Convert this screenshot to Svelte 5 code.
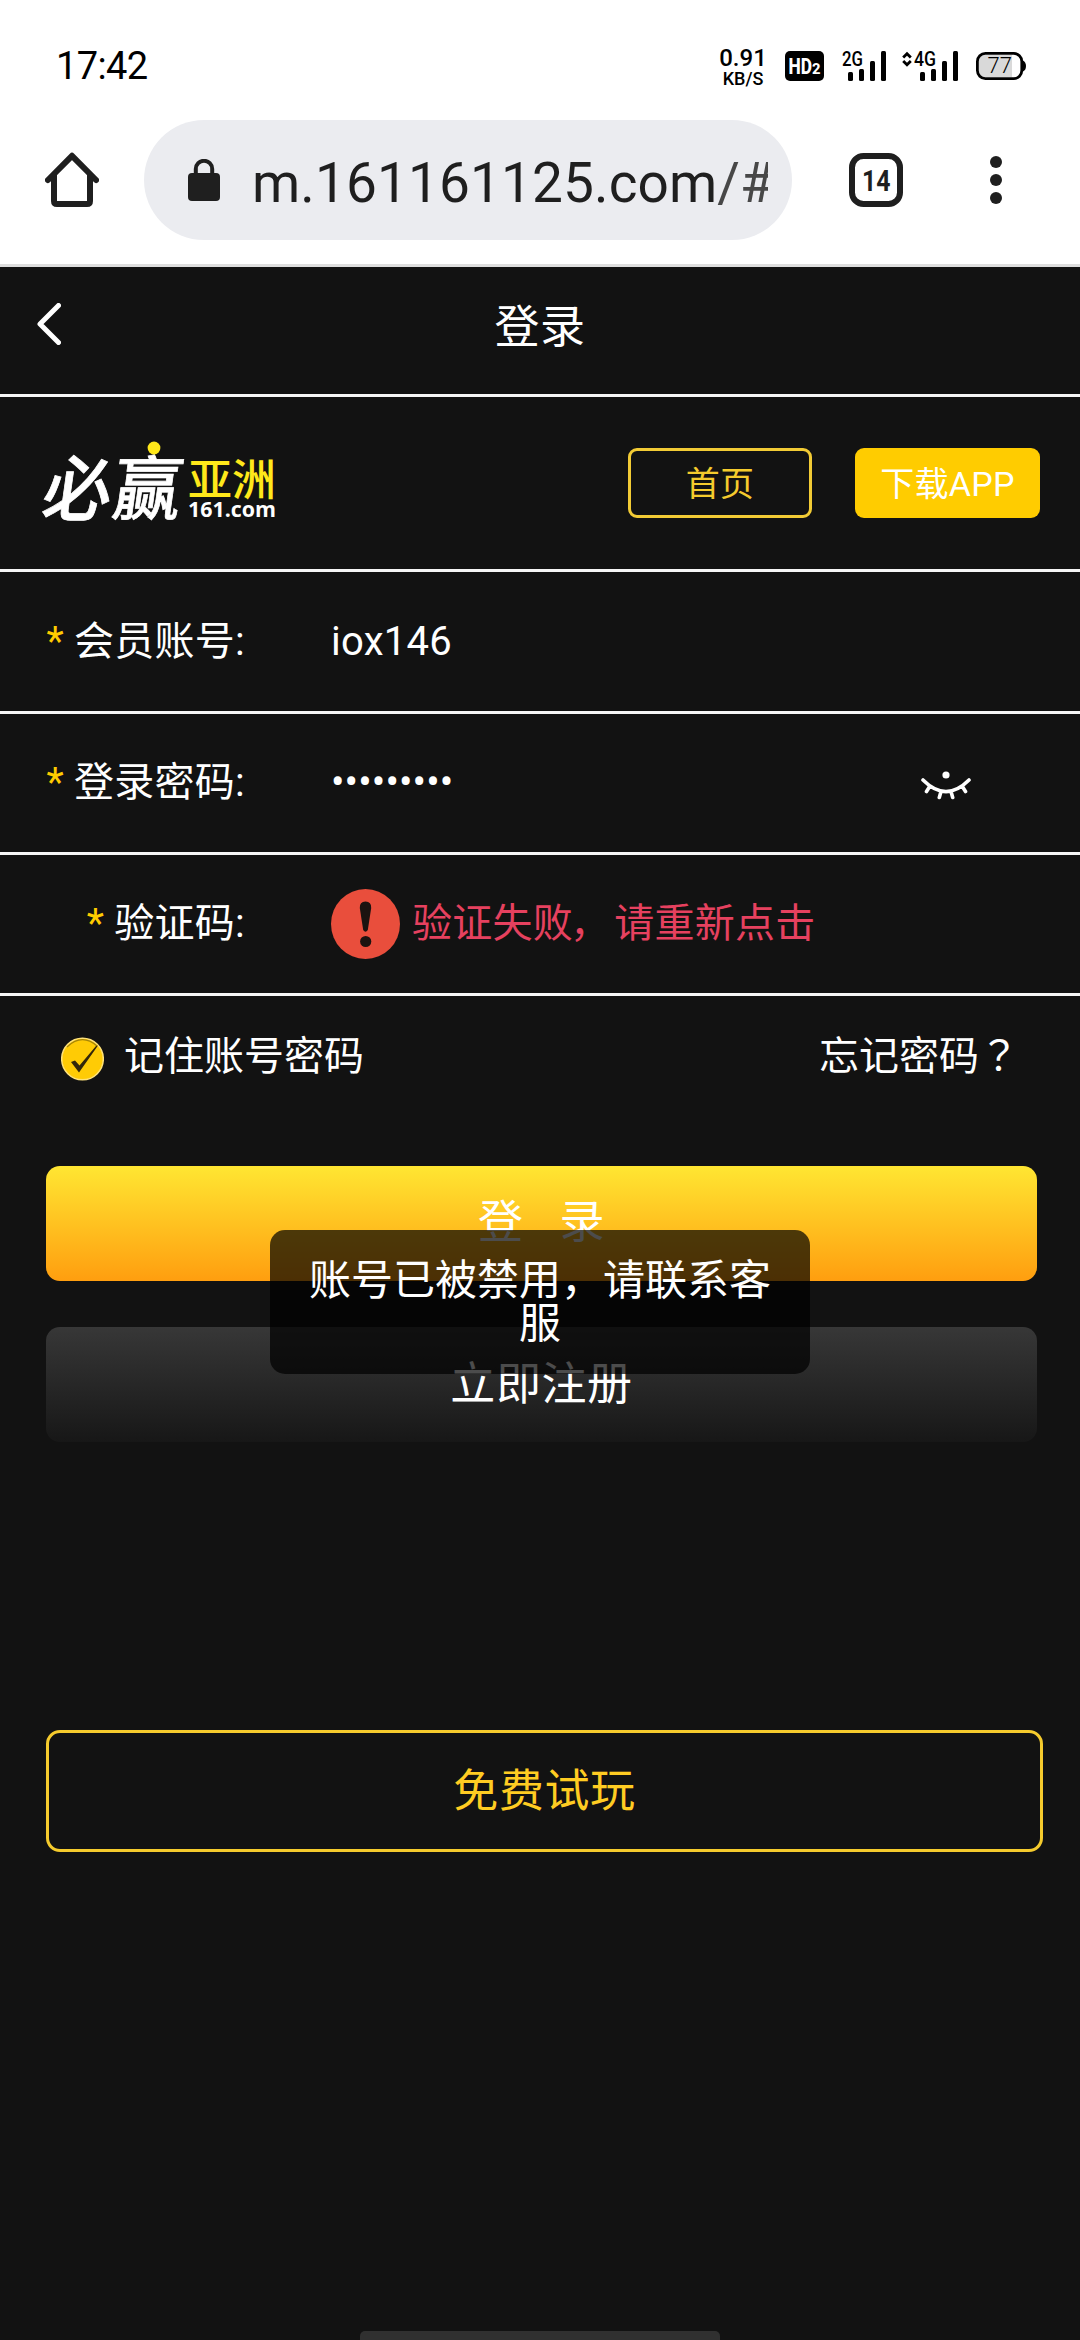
<script lang="ts">
	let account = $state('iox146');
	let password = $state('a1b2c3d4e');
	let remember = $state(true);
	let captchaFailed = $state(true);
	let toast = $state('账号已被禁用，请联系客服');

	const masked = $derived('•'.repeat(password.length));

	// Signal strength bars: x offset and height
	const BARS = [
		{ x: 0, h: 9 },
		{ x: 11, h: 12 },
		{ x: 22, h: 20 },
		{ x: 33, h: 30 },
	];
</script>

{#snippet signal()}
	{#each BARS as bar}
		<rect x={bar.x} y={30 - bar.h} width="5" height={bar.h} rx="1.5" />
	{/each}
{/snippet}

<div class="phone" lang="zh-CN">
	<div class="status-bar">
		<span class="time">17:42</span>
		<div class="status-icons">
			<div class="speed">
				<span class="rate">0.91</span>
				<span class="unit">KB/S</span>
			</div>
			<svg class="hd" width="39" height="30" viewBox="0 0 39 30">
				<rect width="39" height="30" rx="5" />
				<text x="3.5" y="22.5" font-size="22" textLength="23.5" lengthAdjust="spacingAndGlyphs">HD</text>
				<text x="27" y="22.5" font-size="15" textLength="8.5" lengthAdjust="spacingAndGlyphs">2</text>
			</svg>
			<svg class="sim1" width="45" height="30" viewBox="0 0 45 30">
				<text x="0" y="14.5" textLength="21" lengthAdjust="spacingAndGlyphs">2G</text>
				<g transform="translate(6 0)">{@render signal()}</g>
			</svg>
			<svg class="sim2" width="56" height="30" viewBox="0 0 56 30">
				<path d="M1.2 6.5 L5 2.7 L8.8 6.5 M1.2 10 L5 13.8 L8.8 10" fill="none" stroke="#000" stroke-width="2.8" />
				<text x="12" y="14.5" textLength="22" lengthAdjust="spacingAndGlyphs">4G</text>
				<g transform="translate(18 0)">{@render signal()}</g>
			</svg>
			<svg class="battery" width="50" height="28" viewBox="0 0 50 28">
				<path d="M4 3 H36 V25 H8 Q3 25 3 20 V8 Q3 3 8 3 Z" fill="#d9d9d9" />
				<rect x="1.4" y="1.4" width="44.4" height="25.2" rx="8" fill="none" stroke="#000" stroke-width="2.8" />
				<path d="M47 8.5 Q50 10 50 14 Q50 18 47 19.5 Z" />
				<text class="level" x="11.5" y="21.3">77</text>
			</svg>
		</div>
	</div>

	<div class="browser-bar">
		<svg class="home" width="54" height="56" viewBox="0 0 54 56">
			<path d="M3 28 L27 3.8 L51 28 M9 23 V49 Q9 52 12 52 H42 Q45 52 45 49 V23" fill="none" stroke="#1f1f1f" stroke-width="6" stroke-linecap="round" stroke-linejoin="round" />
		</svg>
		<div class="omnibox">
			<svg width="32" height="42" viewBox="0 0 32 42">
				<rect x="0" y="14" width="32" height="28" rx="4" fill="#1f1f1f" />
				<path d="M7.8 16 V10 A8.2 8.2 0 0 1 24.2 10 V16" fill="none" stroke="#1f1f1f" stroke-width="4" />
			</svg>
			<div class="url">m.161161125.com<span>/#</span></div>
		</div>
		<svg class="tabs" width="54" height="54" viewBox="0 0 54 54">
			<rect x="3" y="3" width="48" height="48" rx="11.5" fill="none" stroke="#1f1f1f" stroke-width="6" />
			<text x="13" y="38" textLength="28.5" lengthAdjust="spacingAndGlyphs">14</text>
		</svg>
		<svg class="menu" width="12" height="48" viewBox="0 0 12 48">
			<circle cx="6" cy="6" r="6" />
			<circle cx="6" cy="24" r="6" />
			<circle cx="6" cy="42" r="6" />
		</svg>
	</div>

	<header class="title-bar">
		<svg class="back" width="24" height="42" viewBox="0 0 24 42">
			<path d="M21.5 2.5 L3 21 L21.5 39.5" fill="none" stroke="#fff" stroke-width="5" stroke-linecap="round" stroke-linejoin="round" />
		</svg>
		<h1>登录</h1>
	</header>

	<div class="brand-bar">
		<svg class="logo" width="236" height="84" viewBox="0 0 236 84">
			<text class="logo-main" transform="translate(-2 73.5) skewX(-8) scale(.93 .96)" x="0" y="0">必</text>
			<text class="logo-main" transform="translate(68 73) skewX(-8) scale(.93 .94)" x="0" y="0">赢</text>
			<circle cx="112" cy="7" r="6.4" fill="#ffe81a" />
			<text class="logo-side" x="146" y="55">亚洲</text>
			<text class="logo-site" x="146" y="76" textLength="88" lengthAdjust="spacingAndGlyphs">161.com</text>
		</svg>
		<button class="small-btn outline">首页</button>
		<button class="small-btn solid">下载APP</button>
	</div>

	<div class="field">
		<span class="label"><i>*</i> 会员账号:</span>
		<span class="value">{account}</span>
	</div>
	<div class="field">
		<span class="label"><i>*</i> 登录密码:</span>
		<span class="value masked">{masked}</span>
		<svg class="eye" width="50" height="30" viewBox="0 0 50 30">
			<circle cx="25" cy="4" r="3.6" fill="#fff" />
			<path d="M2 9 Q25 32 48 9 M9 15 L5.5 20.5 M20 20.5 L18.3 26.5 M30 20.5 L31.7 26.5 M41 15 L44.5 20.5" fill="none" stroke="#fff" stroke-width="3.6" stroke-linecap="round" />
		</svg>
	</div>
	<div class="field">
		<span class="label"><i>*</i> 验证码:</span>
		{#if captchaFailed}
			<svg class="warn" width="69" height="70" viewBox="0 0 69 70">
				<ellipse cx="34.5" cy="35" rx="34.5" ry="35" fill="#e94e3c" />
				<path d="M34.5 12.5 Q40.5 12.5 40.2 19 L36.8 41 Q34.5 44.5 32.2 41 L28.8 19 Q28.5 12.5 34.5 12.5 Z" fill="#1b1310" />
				<circle cx="34.7" cy="52.5" r="5.6" fill="#1b1310" />
			</svg>
			<span class="error">验证失败<span class="comma">，</span>请重新点击</span>
		{/if}
	</div>

	<div class="options">
		<button class="remember" onclick={() => (remember = !remember)}>
			<svg width="43" height="44" viewBox="0 0 43 44">
				<circle cx="21.5" cy="22" r="20.8" fill="#ffcb05" stroke="#ffe27a" stroke-width="1.5" />
				<path d="M6 10 Q21 -4 36 9" fill="none" stroke="#a58408" stroke-width="1.2" />
				{#if remember}
					<path d="M10 25 L14 23.5 L18.5 28.5 L35 9 L37 8.5 L18 35.5 Z" fill="#33260a" />
				{/if}
			</svg>
			<span>记住账号密码</span>
		</button>
		<span class="forgot">忘记密码<span lang="ja">？</span></span>
	</div>

	<div class="actions">
		<button class="btn login">登<span>录</span></button>
		<button class="btn register">立即注册</button>
		<button class="btn trial">免费试玩</button>
		{#if toast}
			<div class="toast">{toast}</div>
		{/if}
	</div>

	<div class="nav-handle"></div>
</div>

<style>
	:global(body) {
		background: #121212;
	}

	.phone {
		display: flex;
		flex-direction: column;
		width: 1080px;
		height: 2340px;
		overflow: hidden;
		background: #121212;
		color: #fff;
		font-family: Roboto, 'Noto Sans CJK SC', sans-serif;
		font-size: 40px;
		line-height: 1;
	}

	button {
		padding: 0;
		border: none;
		background: none;
		color: inherit;
		font: inherit;
	}

	svg { display: block; flex: none; }

	/* ── Status bar ───────────────────────────── */
	.status-bar {
		display: flex;
		align-items: flex-start;
		justify-content: space-between;
		box-sizing: border-box;
		height: 120px;
		padding: 47px 54px 0 56px;
		background: #fff;
		color: #000;
		flex: none;
	}

	.time {
		font-size: 38px;
		line-height: 38px;
		letter-spacing: -0.6px;
	}

	.status-icons {
		display: flex;
		align-items: flex-start;
	}

	.speed {
		display: flex;
		flex-direction: column;
		align-items: center;
		width: 48px;
		margin: -1px 18px 0 0;
		font-weight: 500;
	}

	.rate { font-size: 24px; line-height: 24px; }
	.unit { font-size: 18px; line-height: 17px; }

	.hd { margin: 4px 18px 0 0; }
	.hd text { fill: #fff; font-weight: 800; }

	.sim1, .sim2 { margin-top: 4px; overflow: visible; }
	.sim1 { margin-right: 15px; }
	.sim2 { margin-right: 18px; }
	.sim1 text, .sim2 text { font-size: 20px; font-weight: 500; }

	.battery { margin-top: 5px; }
	.battery .level { font-size: 22px; font-weight: 300; }

	/* ── Browser bar ──────────────────────────── */
	.browser-bar {
		display: flex;
		align-items: center;
		box-sizing: border-box;
		height: 147px;
		padding: 0 78px 24px 45px;
		border-bottom: 3px solid #dedede;
		background: #fff;
		flex: none;
	}

	.omnibox {
		display: flex;
		align-items: center;
		box-sizing: border-box;
		width: 648px;
		height: 120px;
		margin-left: 45px;
		padding: 0 24px 0 44px;
		border-radius: 60px;
		background: #ebecf0;
	}

	.url {
		flex: 1;
		min-width: 0;
		margin-left: 32px;
		overflow: hidden;
		color: #1f1f1f;
		font-size: 55px;
		line-height: 68px;
		padding-top: 5px;
		white-space: nowrap;
		letter-spacing: 0.1px;
	}

	.url span { color: #474747; }

	.tabs { margin-left: 57px; }
	.tabs text { fill: #1f1f1f; font-size: 30px; font-weight: 700; }

	.menu { margin-left: auto; fill: #1f1f1f; }

	/* ── Header ───────────────────────────────── */
	.title-bar {
		display: grid;
		grid-template-columns: 120px 1fr 120px;
		align-items: center;
		box-sizing: border-box;
		height: 130px;
		padding-bottom: 7px;
		border-bottom: 3px solid #f5f5f5;
		flex: none;
	}

	.back { margin: -6px 0 0 37px; }

	h1 {
		margin: 0;
		font-size: 45px;
		font-weight: 400;
		text-align: center;
		letter-spacing: 0.6px;
	}

	.brand-bar {
		display: flex;
		align-items: center;
		box-sizing: border-box;
		height: 175px;
		padding: 0 40px 0 42px;
		border-bottom: 3px solid #f5f5f5;
		flex: none;
	}

	.logo { margin-right: auto; overflow: visible; }
	.logo-main { fill: #fff; font-size: 74px; font-weight: 500; stroke: #fff; stroke-width: 0.8; }
	.logo-side { fill: #ffe81a; font-size: 44px; font-weight: 500; }
	.logo-site { fill: #fff; font-family: 'Open Sans', sans-serif; font-size: 22px; font-weight: 700; }

	.small-btn {
		box-sizing: border-box;
		height: 70px;
		padding-top: 1px;
		border-radius: 9px;
		font-size: 34px;
		letter-spacing: 0.3px;
	}

	.outline { width: 184px; border: 3px solid #f2cb35; color: #f5cb2d; }
	.solid { width: 185px; margin-left: 43px; background: #ffcc00; }

	/* ── Form ─────────────────────────────────── */
	.field {
		display: flex;
		align-items: center;
		box-sizing: border-box;
		height: 141px;
		border-bottom: 3px solid #f5f5f5;
		letter-spacing: 0.25px;
		flex: none;
	}

	.brand-bar + .field { height: 142px; }

	.label {
		width: 245px;
		margin-right: 86px;
		text-align: right;
	}

	.label i { color: #fc0; font-style: normal; }
	.masked { letter-spacing: 0.1px; }
	.eye { margin: 5px 109px 0 auto; }
	.error { margin-left: 12px; color: #e6415f; }
	.comma { margin: 0 4px 0 -3px; }

	.options {
		display: flex;
		justify-content: space-between;
		align-items: center;
		height: 125px;
		padding: 0 61px 0 61px;
		flex: none;
	}

	.options span { padding-bottom: 3px; }
	.remember { display: flex; align-items: center; gap: 20px; }

	/* ── Buttons ──────────────────────────────── */
	.actions {
		position: relative;
		display: flex;
		flex-direction: column;
		padding: 45px 37px 0 46px;
	}

	.btn {
		box-sizing: border-box;
		width: 991px;
		height: 115px;
		border-radius: 14px;
		font-size: 45px;
		letter-spacing: 0.6px;
	}

	.login { padding-bottom: 2px; background: linear-gradient(#ffe632, #ff9e0f); }
	.login span { margin-left: 36px; }
	.register { margin-top: 46px; background: linear-gradient(#373737, #171717); }

	.trial {
		width: 997px;
		height: 122px;
		margin-top: 288px;
		border: 3px solid #f5cb2d;
		color: #fc2;
	}

	.toast {
		position: absolute;
		top: 109px;
		left: 270px;
		box-sizing: border-box;
		width: 540px;
		height: 144px;
		padding: 29px 38px 27px;
		border-radius: 15px;
		background: rgba(0, 0, 0, 0.7);
		font-size: 42px;
		line-height: 43px;
		text-align: center;
	}

	.nav-handle {
		width: 360px;
		height: 9px;
		margin: auto auto 0;
		border-radius: 5px 5px 0 0;
		background: #303030;
	}
</style>
